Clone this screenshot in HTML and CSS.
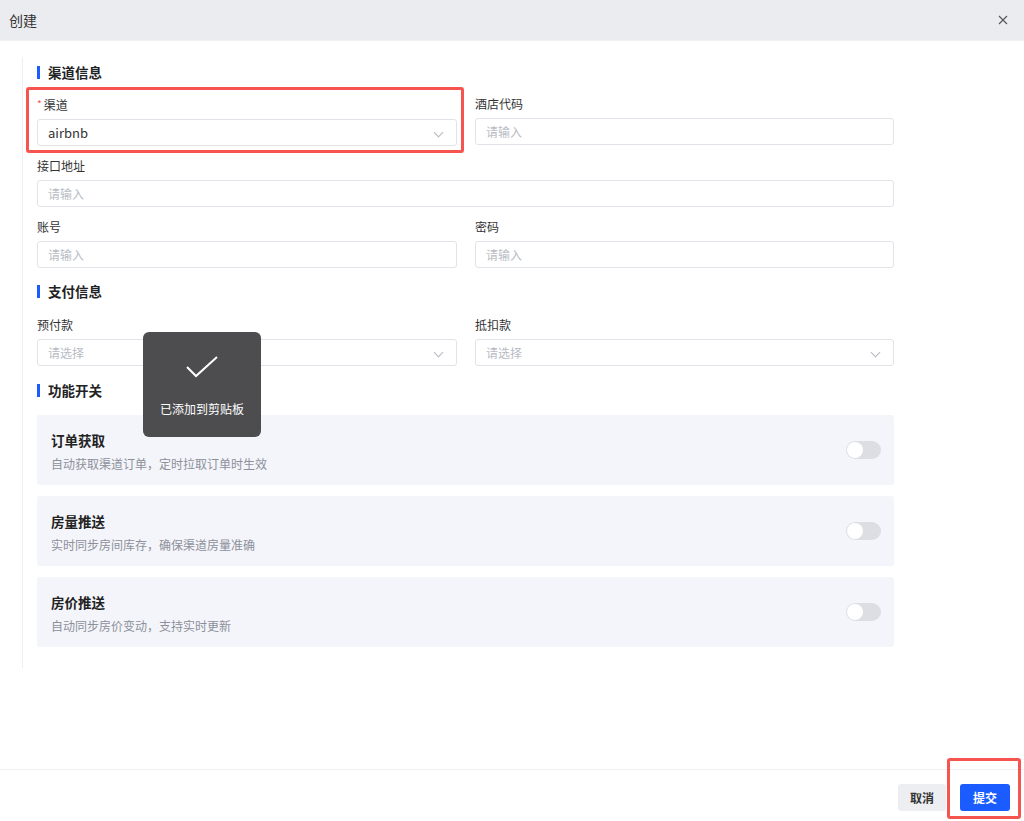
FILE: index.html
```html
<!DOCTYPE html>
<html lang="zh-CN">
<head>
    <meta charset="UTF-8">
    <meta name="viewport" content="width=device-width, initial-scale=1.0">
    <title>创建</title>
    <link rel="stylesheet" href="styles.css">
</head>
<body>
    <div class="dialog">
        <div class="dialog-header">
            <span class="dialog-title">创建</span>
            <span class="dialog-close">
                <svg width="10" height="10" viewBox="0 0 10 10"><path d="M1 1L9 9M9 1L1 9" stroke="#555" stroke-width="1.1" fill="none"/></svg>
            </span>
        </div>

        <div class="dialog-body">
            <div class="form-wrap">
                <div class="section-title">渠道信息</div>
                <div class="form-grid">
                    <div class="form-item">
                        <label class="form-label"><span class="req">*</span>渠道</label>
                        <div class="input select has-value">airbnb<span class="arrow"></span></div>
                    </div>
                    <div class="form-item">
                        <label class="form-label">酒店代码</label>
                        <div class="input">请输入</div>
                    </div>
                    <div class="form-item full">
                        <label class="form-label">接口地址</label>
                        <div class="input">请输入</div>
                    </div>
                    <div class="form-item">
                        <label class="form-label">账号</label>
                        <div class="input">请输入</div>
                    </div>
                    <div class="form-item">
                        <label class="form-label">密码</label>
                        <div class="input">请输入</div>
                    </div>
                </div>

                <div class="section-title">支付信息</div>
                <div class="form-grid">
                    <div class="form-item">
                        <label class="form-label">预付款</label>
                        <div class="input select">请选择<span class="arrow"></span></div>
                    </div>
                    <div class="form-item">
                        <label class="form-label">抵扣款</label>
                        <div class="input select">请选择<span class="arrow"></span></div>
                    </div>
                </div>

                <div class="section-title">功能开关</div>
                <div class="switch-list">
                    <div class="switch-card">
                        <div class="switch-info">
                            <div class="switch-name">订单获取</div>
                            <div class="switch-desc">自动获取渠道订单，定时拉取订单时生效</div>
                        </div>
                        <span class="toggle"></span>
                    </div>
                    <div class="switch-card">
                        <div class="switch-info">
                            <div class="switch-name">房量推送</div>
                            <div class="switch-desc">实时同步房间库存，确保渠道房量准确</div>
                        </div>
                        <span class="toggle"></span>
                    </div>
                    <div class="switch-card">
                        <div class="switch-info">
                            <div class="switch-name">房价推送</div>
                            <div class="switch-desc">自动同步房价变动，支持实时更新</div>
                        </div>
                        <span class="toggle"></span>
                    </div>
                </div>
            </div>
        </div>

        <div class="dialog-footer">
            <button class="btn btn-cancel">取消</button>
            <button class="btn btn-primary">提交</button>
        </div>
    </div>

    <!-- toast -->
    <div class="toast">
        <svg width="34" height="24" viewBox="0 0 34 24"><path d="M2 12L11 21L32 2" stroke="#fff" stroke-width="2" fill="none"/></svg>
        <div class="toast-text">已添加到剪贴板</div>
    </div>

    <!-- 标注框 -->
    <div class="mark mark-channel"></div>
    <div class="mark mark-submit"></div>
</body>
</html>
```

FILE: styles.css
```css
* { margin: 0; padding: 0; box-sizing: border-box; }
body {
    font-family: "Noto Sans CJK SC", "Noto Sans", sans-serif;
    background: #fff;
    color: #333;
    width: 1024px;
    height: 821px;
    overflow: hidden;
    position: relative;
}
.dialog {
    height: 821px;
    display: flex;
    flex-direction: column;
}
.dialog-header {
    height: 41px;
    background: #ebecef;
    display: flex;
    align-items: center;
    justify-content: space-between;
    padding: 0 16px 0 9px;
    border-bottom: 1px solid #f0f1f3;
}
.dialog-title {
    font-size: 14px;
    color: #333;
}
.dialog-close {
    display: flex;
    align-items: center;
}
.dialog-body {
    flex: 1;
    padding-top: 16px;
}
.form-wrap {
    margin-left: 22px;
    width: 873px;
    border-left: 1px solid #eeeff2;
    padding: 6px 0 21px 14px;
}
.section-title {
    font-size: 13.5px;
    font-weight: bold;
    color: #222;
    line-height: 18px;
    height: 18px;
    padding-left: 11px;
    position: relative;
}
.section-title::before {
    content: "";
    position: absolute;
    left: 0;
    top: 3px;
    width: 3px;
    height: 13px;
    background: #1a5cff;
}
.form-grid {
    display: grid;
    grid-template-columns: 420px 419px;
    column-gap: 18px;
    row-gap: 10px;
    margin: 13px 0 14px;
}
.form-grid + .section-title + .form-grid {
    margin: 15px 0 15px;
}
.form-item.full {
    grid-column: 1 / 3;
}
.form-label {
    display: block;
    font-size: 12px;
    line-height: 20px;
    color: #333;
    margin-bottom: 4px;
}
.req {
    color: #f5544f;
    font-size: 10px;
    margin-right: 2px;
    vertical-align: 2px;
}
.input {
    height: 27px;
    border: 1px solid #e1e3e8;
    border-radius: 3px;
    padding: 0 10px;
    font-size: 12px;
    line-height: 25px;
    color: #b8bcc4;
    position: relative;
}
.input.has-value {
    color: #333;
    font-size: 13px;
}
.arrow {
    position: absolute;
    right: 14px;
    top: 9px;
    width: 7px;
    height: 7px;
    border-right: 1px solid #b5b9c0;
    border-bottom: 1px solid #b5b9c0;
    transform: rotate(45deg);
}
.switch-list {
    display: flex;
    flex-direction: column;
    gap: 11px;
    margin-top: 16px;
    width: 857px;
}
.switch-card {
    height: 70px;
    background: #f4f5fa;
    border-radius: 3px;
    display: flex;
    align-items: center;
    justify-content: space-between;
    padding: 0 13px 0 14px;
}
.switch-info {
    padding-top: 2px;
}
.switch-name {
    font-size: 13.5px;
    font-weight: bold;
    color: #222;
    line-height: 20px;
}
.switch-desc {
    font-size: 12px;
    color: #8c909a;
    line-height: 18px;
    margin-top: 5px;
}
.toggle {
    width: 35px;
    height: 18px;
    border-radius: 9px;
    background: #dcdee4;
    position: relative;
}
.toggle::after {
    content: "";
    position: absolute;
    left: 1px;
    top: 1px;
    width: 16px;
    height: 16px;
    border-radius: 50%;
    background: #fff;
}
.dialog-footer {
    height: 52px;
    border-top: 1px solid #eeeff2;
    display: flex;
    justify-content: flex-end;
    align-items: flex-start;
    gap: 14px;
    padding: 14px 14px 0 0;
}
.btn {
    height: 27px;
    border: none;
    border-radius: 3px;
    font-family: inherit;
    font-size: 12px;
    font-weight: bold;
    padding: 0 12px;
}
.btn-cancel {
    background: #eceef2;
    color: #333;
}
.btn-primary {
    background: #1a5cff;
    color: #fff;
    padding: 0 13px;
}
.toast {
    position: absolute;
    left: 143px;
    top: 332px;
    width: 118px;
    height: 105px;
    background: #4d4d4f;
    border-radius: 6px;
    display: flex;
    flex-direction: column;
    align-items: center;
    padding-top: 23px;
}
.toast-text {
    color: #fff;
    font-size: 12px;
    margin-top: 21px;
}
.mark {
    position: absolute;
    border: 3px solid #f5544f;
    border-radius: 3px;
}
.mark-channel {
    left: 26px;
    top: 87px;
    width: 438px;
    height: 66px;
}
.mark-submit {
    left: 947px;
    top: 758px;
    width: 74px;
    height: 61px;
}
```
